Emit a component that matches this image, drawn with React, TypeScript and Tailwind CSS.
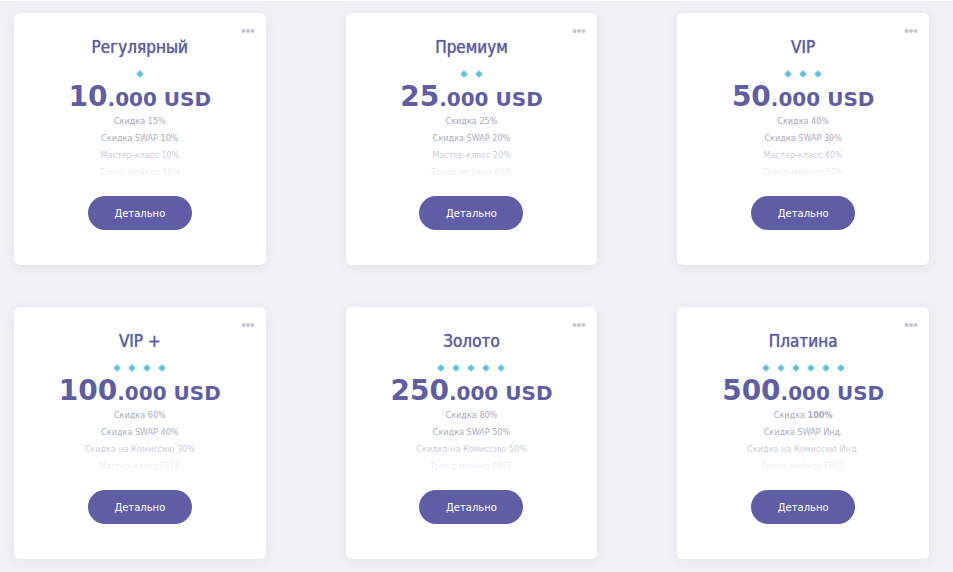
type Perk = { label: string; value: string; strong?: boolean };

type Plan = {
  title: string;
  level: number;
  amount: string;
  perks: Perk[];
};

const PLANS: Plan[] = [
  {
    title: 'Регулярный',
    level: 1,
    amount: '10',
    perks: [
      { label: 'Скидка', value: '15%' },
      { label: 'Скидка SWAP', value: '10%' },
      { label: 'Мастер-класс', value: '10%' },
      { label: 'Тренд-мейкер', value: '30%' },
    ],
  },
  {
    title: 'Премиум',
    level: 2,
    amount: '25',
    perks: [
      { label: 'Скидка', value: '25%' },
      { label: 'Скидка SWAP', value: '20%' },
      { label: 'Мастер-класс', value: '20%' },
      { label: 'Тренд-мейкер', value: '40%' },
    ],
  },
  {
    title: 'VIP',
    level: 3,
    amount: '50',
    perks: [
      { label: 'Скидка', value: '40%' },
      { label: 'Скидка SWAP', value: '30%' },
      { label: 'Мастер-класс', value: '40%' },
      { label: 'Тренд-мейкер', value: '50%' },
    ],
  },
  {
    title: 'VIP +',
    level: 4,
    amount: '100',
    perks: [
      { label: 'Скидка', value: '60%' },
      { label: 'Скидка SWAP', value: '40%' },
      { label: 'Скидка на Комиссию', value: '30%' },
      { label: 'Мастер-класс', value: 'FREE' },
    ],
  },
  {
    title: 'Золото',
    level: 5,
    amount: '250',
    perks: [
      { label: 'Скидка', value: '80%' },
      { label: 'Скидка SWAP', value: '50%' },
      { label: 'Скидка на Комиссию', value: '50%' },
      { label: 'Тренд-мейкер', value: 'FREE' },
    ],
  },
  {
    title: 'Платина',
    level: 6,
    amount: '500',
    perks: [
      { label: 'Скидка', value: '100%', strong: true },
      { label: 'Скидка SWAP', value: 'Инд.' },
      { label: 'Скидка на Комиссию', value: 'Инд.' },
      { label: 'Тренд-мейкер', value: 'FREE' },
    ],
  },
];

const Diamond = () => (
  <svg viewBox="0 0 8 8" className="size-2" aria-hidden="true">
    <path d="M4 0 8 4 4 8 0 4Z" fill="#a5e3ef" />
    <rect x="1.6" y="1.6" width="4.8" height="4.8" rx="1.2" fill="#a5e3ef" />
    <path d="M4 0.8 7.2 4 4 7.2 0.8 4Z" fill="#5fbfda" />
  </svg>
);

const MoreIcon = () => (
  <svg viewBox="0 0 14 6" className="h-1.5 w-3.5" aria-hidden="true">
    <circle cx="2.5" cy="3" r="2" fill="#c6c5d2" />
    <circle cx="7" cy="3" r="2" fill="#c6c5d2" />
    <circle cx="11.5" cy="3" r="2" fill="#c6c5d2" />
  </svg>
);

const PlanCard = ({ plan }: { plan: Plan }) => (
  <article className="relative flex flex-col items-center rounded-md bg-white pt-6 pb-[35px] text-[#5f5da3] shadow-[0_2px_12px_rgba(95,93,166,0.08)]">
    <button type="button" aria-label={plan.title} className="absolute top-[15px] right-[11px]">
      <MoreIcon />
    </button>
    <h2 className="font-['DejaVu_Sans_Condensed','DejaVu_Sans',sans-serif] text-[17px] leading-5 font-medium text-shadow-[0_0_1px_#5f5da3]">
      {plan.title}
    </h2>
    <div className="mt-[13px] flex gap-[7px]">
      {[...Array(plan.level)].map((_, index) => (
        <Diamond key={`diamond_${index}`} />
      ))}
    </div>
    <p className="mt-1 text-[28px] leading-[30px] font-bold whitespace-nowrap">
      {plan.amount}
      <span className="text-xl leading-none">.000 USD</span>
    </p>
    <div className="relative mt-px w-full">
      <ul className="text-center font-['DejaVu_Sans_Condensed','DejaVu_Sans',sans-serif] text-[9px] leading-[17px] text-[#a9a8bd]">
        {plan.perks.map((perk) => (
          <li key={perk.label}>
            {perk.label} {perk.strong ? <b>{perk.value}</b> : perk.value}
          </li>
        ))}
      </ul>
      <div className="absolute inset-0 bg-linear-to-b from-white/0 from-35% to-white" />
    </div>
    <button
      type="button"
      className="mt-[15px] h-[34px] w-[104px] rounded-full bg-[#5f5da6] text-[10px] text-white"
    >
      Детально
    </button>
  </article>
);

const App = () => (
  <main className="min-h-screen border-t border-white bg-[#f1f0f6] pt-3 pr-6 pb-3 pl-3.5 font-['DejaVu_Sans',sans-serif]">
    <div className="grid grid-cols-3 gap-x-20 gap-y-[42px]">
      {PLANS.map((plan) => (
        <PlanCard key={plan.title} plan={plan} />
      ))}
    </div>
  </main>
);

export default App;
